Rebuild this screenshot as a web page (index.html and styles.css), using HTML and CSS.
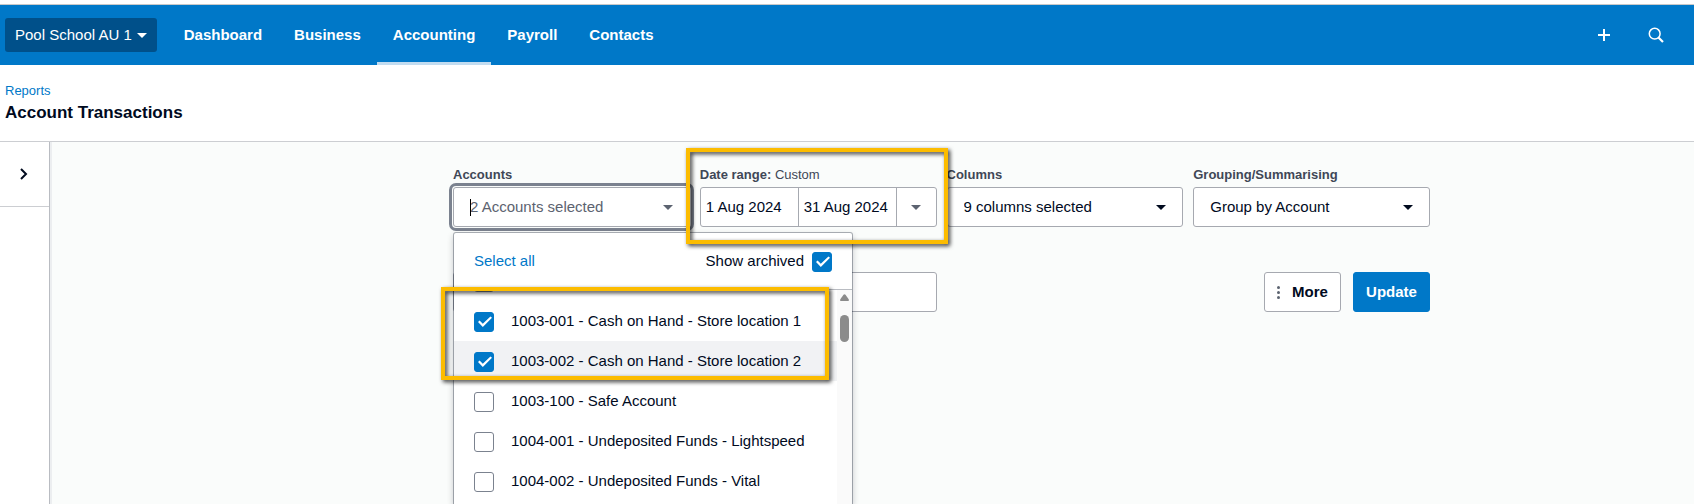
FILE: index.html
```html
<!DOCTYPE html>
<html lang="en">
<head>
    <meta charset="UTF-8">
    <meta name="viewport" content="width=device-width, initial-scale=1.0">
    <title>Account Transactions</title>
    <link rel="stylesheet" href="styles.css">
</head>
<body>
    <header class="navbar">
        <button class="org-btn">Pool School AU 1
            <svg class="arrow" viewBox="0 0 10 5"><path d="M0 0h10L5 5z"/></svg>
        </button>
        <nav class="nav-links">
            <a href="#">Dashboard</a>
            <a href="#">Business</a>
            <a href="#" class="active">Accounting</a>
            <a href="#">Payroll</a>
            <a href="#">Contacts</a>
        </nav>
        <div class="nav-icons">
            <button aria-label="Create new">
                <svg width="16" height="16" viewBox="0 0 16 16" fill="none" stroke="currentColor" stroke-width="2"><path d="M8 2v12M2 8h12"/></svg>
            </button>
            <button aria-label="Search">
                <svg width="16" height="16" viewBox="0 0 16 16" fill="none" stroke="currentColor"><circle cx="6.700" cy="6.700" r="5.400" stroke-width="1.500"/><path d="M10.500 10.500l4.500 4.500" stroke-width="2.200"/></svg>
            </button>
        </div>
    </header>

    <div class="page-title">
        <a href="#">Reports</a>
        <h1>Account Transactions</h1>
    </div>

    <div class="layout">
        <aside class="sidebar">
            <button aria-label="Expand panel">
                <svg width="12" height="12" viewBox="0 0 12 12" fill="none" stroke="currentColor" stroke-width="2"><path d="M3 1l5 5-5 5"/></svg>
            </button>
        </aside>

        <main class="content">
            <form class="filters">
                <div class="field">
                    <label for="accounts">Accounts</label>
                    <div class="control focused">
                        <input type="text" id="accounts" value="2 Accounts selected">
                        <svg class="arrow" viewBox="0 0 10 5"><path d="M0 0h10L5 5z"/></svg>
                    </div>

                    <div class="dropdown">
                        <div class="dropdown-header">
                            <a href="#">Select all</a>
                            <label>Show archived <input type="checkbox" checked></label>
                        </div>
                        <div class="dropdown-body">
                            <ul class="account-list">
                                <li><label><input type="checkbox" aria-label="Account"></label></li>
                                <li><label><input type="checkbox" checked>1003-001 - Cash on Hand - Store location 1</label></li>
                                <li class="hovered"><label><input type="checkbox" checked>1003-002 - Cash on Hand - Store location 2</label></li>
                                <li><label><input type="checkbox">1003-100 - Safe Account</label></li>
                                <li><label><input type="checkbox">1004-001 - Undeposited Funds - Lightspeed</label></li>
                                <li><label><input type="checkbox">1004-002 - Undeposited Funds - Vital</label></li>
                            </ul>
                            <div class="scrollbar">
                                <svg width="9" height="7" viewBox="0 0 9 7"><path d="M3.500 .8Q4.500-.5 5.500 .8L8.700 5.300Q9.300 7 7.800 7H1.200Q-.3 7 .3 5.300z" fill="#8b8b8b"/></svg>
                                <div class="thumb"></div>
                            </div>
                        </div>
                        <div class="highlight highlight-accounts"></div>
                    </div>
                </div>

                <div class="field">
                    <label for="date-from">Date range: <span>Custom</span></label>
                    <div class="control date-range">
                        <input type="text" id="date-from" value="1 Aug 2024">
                        <input type="text" aria-label="Date to" value="31 Aug 2024">
                        <button type="button" aria-label="Choose date range">
                            <svg class="arrow" viewBox="0 0 10 5"><path d="M0 0h10L5 5z"/></svg>
                        </button>
                    </div>
                    <div class="highlight highlight-dates"></div>
                </div>

                <div class="field">
                    <label for="columns">Columns</label>
                    <div class="control">
                        <select id="columns"><option>9 columns selected</option></select>
                        <svg class="arrow" viewBox="0 0 10 5"><path d="M0 0h10L5 5z"/></svg>
                    </div>
                </div>

                <div class="field">
                    <label for="grouping">Grouping/Summarising</label>
                    <div class="control">
                        <select id="grouping"><option>Group by Account</option></select>
                        <svg class="arrow" viewBox="0 0 10 5"><path d="M0 0h10L5 5z"/></svg>
                    </div>
                </div>

                <div class="field wide">
                    <div class="control">
                        <input type="text" aria-label="Filter">
                    </div>
                </div>

                <div class="actions">
                    <button type="button" class="btn">
                        <svg width="3" height="13" viewBox="0 0 3 13" fill="#5c6370"><circle cx="1.500" cy="1.500" r="1.500"/><circle cx="1.500" cy="6.500" r="1.500"/><circle cx="1.500" cy="11.500" r="1.500"/></svg>
                        More
                    </button>
                    <button type="button" class="btn btn-primary">Update</button>
                </div>
            </form>
        </main>
    </div>
</body>
</html>
```
FILE: styles.css
```css
:root {
    --blue: #0078c8;
    --text: #000a1e;
    --muted: #5c6370;
    --label: #404756;
    --border: #a6a9b0;
    --line: #ccced2;
    --highlight: #fcbc00;
}

* {
    margin: 0;
    padding: 0;
    box-sizing: border-box;
}

body {
    display: flex;
    flex-direction: column;
    height: 100vh;
    overflow: hidden;
    padding-top: 4px;
    background: #fff;
    color: var(--text);
    font-family: "Liberation Sans", Arial, sans-serif;
    font-size: 15px;
    line-height: 20px;
}

button, input, select {
    font: inherit;
    color: inherit;
    background: none;
    border: none;
}

a {
    color: var(--blue);
    text-decoration: none;
}

.arrow {
    width: 10px;
    height: 5px;
    fill: currentColor;
}

/* Top navigation */
.navbar {
    display: flex;
    align-items: center;
    flex-shrink: 0;
    height: 61px;
    padding: 0 12px 0 5px;
    border-top: 1px solid #c8c8c8;
    background: var(--blue);
    color: #fff;
}

.org-btn {
    display: flex;
    align-items: center;
    gap: 5px;
    height: 34px;
    padding: 0 10px;
    border-radius: 3px;
    background: #00508a;
    white-space: nowrap;
}

.nav-links {
    display: flex;
    align-self: stretch;
    margin-left: 11px;
}

.nav-links a {
    display: flex;
    align-items: center;
    padding: 3px 16px 0;
    border-bottom: 3px solid transparent;
    color: #fff;
    font-weight: bold;
}

.nav-links .active {
    border-color: #c2dcf0;
}

.nav-icons {
    display: flex;
    margin-left: auto;
}

.nav-icons button {
    width: 52px;
    height: 40px;
}

.nav-icons svg {
    display: block;
    margin: 0 auto;
}

.page-title {
    flex-shrink: 0;
    height: 77px;
    padding: 16px 5px 0;
    border-bottom: 1px solid var(--line);
}

.page-title a {
    display: block;
    font-size: 13px;
}

.page-title h1 {
    margin-top: 2px;
    font-size: 17px;
    line-height: 20px;
}

.layout {
    display: flex;
    flex: 1;
    min-height: 0;
}

.sidebar {
    flex: 0 0 52px;
    border-right: 2px solid #eceef0;
    box-shadow: inset -1px 0 0 #b9bcc2;
}

.sidebar button {
    display: flex;
    align-items: center;
    justify-content: center;
    width: 49px;
    height: 65px;
    padding-right: 2px;
    border-bottom: 1px solid var(--line);
}

.content {
    flex: 1;
    padding: 23px 20px 0 401px;
    background: #fafcfb;
}

/* Filters */
.filters {
    display: grid;
    grid-template-columns: repeat(4, 1fr);
    gap: 45px 10px;
    max-width: 977px;
}

.field {
    position: relative;
    min-width: 0;
}

.wide {
    grid-column: span 2;
}

.field > label {
    display: block;
    height: 22px;
    color: var(--label);
    font-size: 13px;
    font-weight: bold;
}

.field > label span {
    font-weight: normal;
}

.control {
    display: flex;
    position: relative;
    height: 40px;
    border: 1px solid var(--border);
    border-radius: 3px;
    background: #fff;
}

.control input,
.control select {
    flex: 1;
    min-width: 0;
    padding: 0 16px;
    appearance: none;
    outline: none;
}

.control > .arrow {
    position: absolute;
    top: 17px;
    right: 16px;
}

.focused {
    color: var(--muted);
    outline: 3px solid #7b828f;
    outline-offset: 1px;
}

/* text cursor */
.focused::before {
    content: "";
    position: absolute;
    top: 11px;
    left: 16px;
    width: 1px;
    height: 17px;
    background: #000;
}

.control.date-range input {
    padding: 0 5px;
    border-right: 1px solid var(--border);
}

.date-range button {
    display: flex;
    align-items: center;
    justify-content: center;
    width: 39px;
    color: var(--muted);
}

.actions {
    display: flex;
    grid-column: span 2;
    justify-content: flex-end;
    gap: 12px;
}

.btn {
    display: flex;
    align-items: center;
    justify-content: center;
    gap: 12px;
    width: 77px;
    height: 40px;
    border: 1px solid var(--border);
    border-radius: 3px;
    background: #fff;
    font-weight: bold;
}

.btn-primary {
    border-color: var(--blue);
    background: var(--blue);
    color: #fff;
}

/* Accounts dropdown */
.dropdown {
    position: absolute;
    top: 67px;
    left: 0;
    z-index: 1;
    width: 400px;
    border: 1px solid rgba(0, 10, 30, 0.3);
    border-bottom: none;
    border-radius: 3px 3px 0 0;
    background: #fff;
    background-clip: padding-box;
    box-shadow: 0 3px 6px rgba(0, 10, 30, 0.2);
}

.dropdown-header {
    display: flex;
    align-items: center;
    justify-content: space-between;
    height: 57px;
    padding: 0 20px;
    border-bottom: 1px solid #b9bcc2;
}

.dropdown-header label {
    display: flex;
    align-items: center;
    gap: 8px;
}

.dropdown-body {
    display: flex;
    height: calc(100vh - 290px);
    overflow: hidden;
}

/* list is scrolled past the first account */
.account-list {
    flex: 1;
    margin-top: -29px;
    list-style: none;
}

.account-list label {
    display: flex;
    align-items: center;
    gap: 17px;
    height: 40px;
    padding-left: 20px;
}

.hovered {
    background: #f1f2f4;
}

input[type="checkbox"] {
    position: relative;
    top: 1px;
    width: 20px;
    height: 20px;
    border: 1px solid #7b828f;
    border-radius: 3px;
    background: #fff;
    appearance: none;
}

input[type="checkbox"]:checked {
    border-color: var(--blue);
    background: var(--blue);
}

input[type="checkbox"]:checked::after {
    content: "";
    position: absolute;
    inset: -1px;
    background: #fff;
    clip-path: polygon(20% 50%, 28% 42%, 44% 59%, 82% 22%, 90% 29%, 44% 75%);
}

.scrollbar {
    display: flex;
    flex-direction: column;
    align-items: center;
    gap: 14px;
    width: 15px;
    padding-top: 4px;
    background: #fafafa;
}

.thumb {
    width: 9px;
    height: 27px;
    border-radius: 5px;
    background: #8b8b8b;
}

/* Callout boxes */
.highlight {
    position: absolute;
    z-index: 2;
    border: 4px solid var(--highlight);
    filter: drop-shadow(2px 2px 2px rgba(0, 0, 0, 0.8));
    pointer-events: none;
}

.highlight-dates {
    top: -17px;
    left: -14px;
    right: -11px;
    height: 96px;
}

.highlight-accounts {
    top: 54px;
    left: -13px;
    width: 388px;
    height: 93px;
}
```
